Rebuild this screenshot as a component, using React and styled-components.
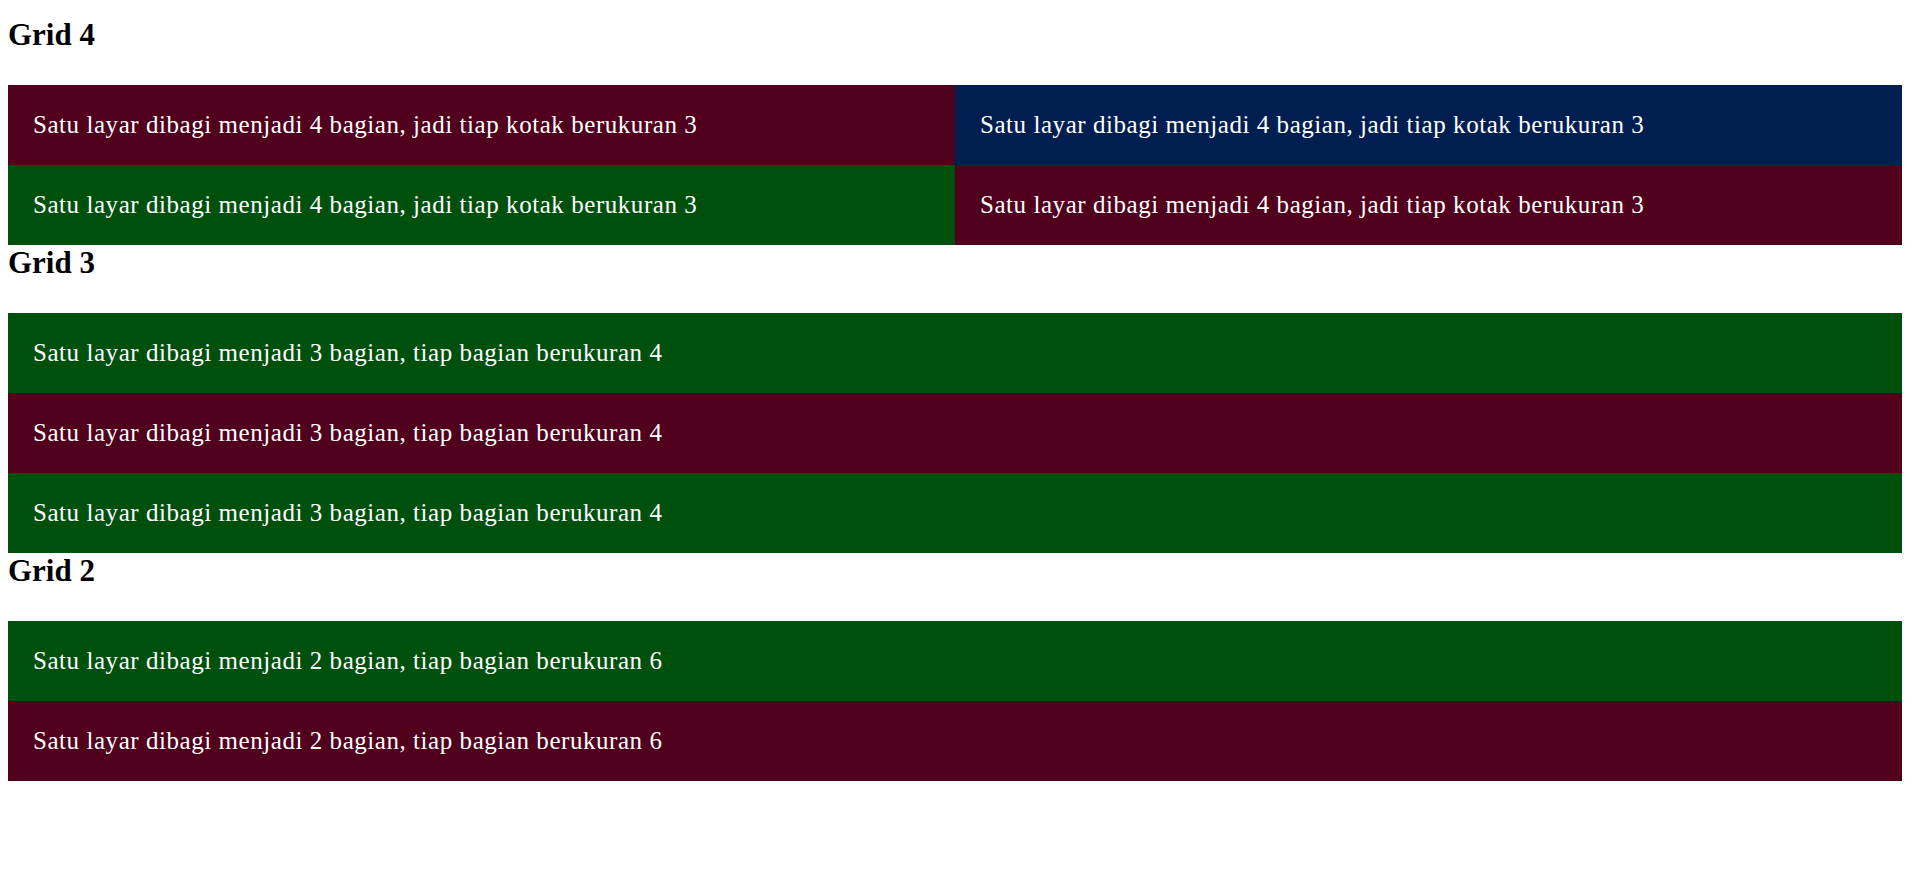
import styled, { createGlobalStyle } from 'styled-components'

const GlobalStyle = createGlobalStyle`
  body {
    margin: 0;
    padding: 8px 13px 8px 8px;
    background: #fff;
    font-family: "Liberation Serif", "Times New Roman", serif;
  }
`

const colors = {
  maroon: '#50001c',
  navy: '#001f50',
  green: '#00500d'
}

const Page = styled.main`
  display: flex;
  flex-direction: column;
  padding-top: 9px;
`

const Title = styled.h1`
  margin: 0 0 32px;
  font-size: 31px;
  font-weight: 700;
  color: #000;
`

const Grid = styled.div`
  display: grid;
  grid-template-columns: repeat(${props => props.$cols}, 1fr);
`

const Cell = styled.div`
  height: 80px;
  display: flex;
  align-items: center;
  padding: 0 25px;
  background: ${props => colors[props.$tone]};
  color: #fff;
  font-size: 25px;
  letter-spacing: 0.55px;
`

const sections = [
  {
    title: 'Grid 4',
    cols: 2,
    text: 'Satu layar dibagi menjadi 4 bagian, jadi tiap kotak berukuran 3',
    tones: ['maroon', 'navy', 'green', 'maroon']
  },
  {
    title: 'Grid 3',
    cols: 1,
    text: 'Satu layar dibagi menjadi 3 bagian, tiap bagian berukuran 4',
    tones: ['green', 'maroon', 'green']
  },
  {
    title: 'Grid 2',
    cols: 1,
    text: 'Satu layar dibagi menjadi 2 bagian, tiap bagian berukuran 6',
    tones: ['green', 'maroon']
  }
]

const App = () => {
  return (
    <>
      <GlobalStyle />
      <Page>
        {sections.map(section => (
          <section key={section.title}>
            <Title>{section.title}</Title>
            <Grid $cols={section.cols}>
              {section.tones.map((tone, i) => (
                <Cell key={i} $tone={tone}>{section.text}</Cell>
              ))}
            </Grid>
          </section>
        ))}
      </Page>
    </>
  )
}

export default App
